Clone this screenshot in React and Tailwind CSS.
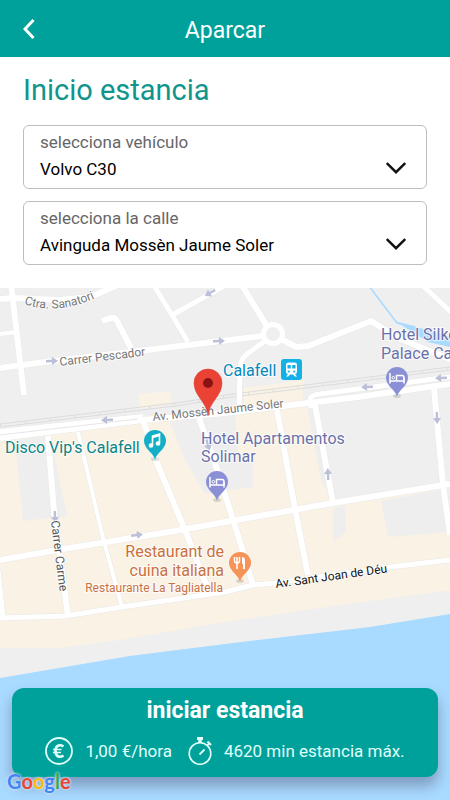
import { useState } from 'react';

const VEHICLES = ['Volvo C30', 'Seat Ibiza'];
const STREETS = ['Avinguda Mossèn Jaume Soler', 'Carrer Pescador', 'Avinguda Sant Joan de Déu'];

/* Drop-down with its caption inside the frame */
const SelectField = ({ id, label, options }) => {
  const [value, setValue] = useState(options[0]);

  return (
    <div className="relative h-16 rounded-md border border-[#bdbdbd] bg-white">
      <label htmlFor={id} className="block px-4 pt-[6px] text-[17px] leading-5 text-[#666]">
        {label}
      </label>
      <select
        id={id}
        value={value}
        onChange={(e) => setValue(e.target.value)}
        className="block w-full appearance-none bg-transparent px-4 pt-[3px] text-[17px] leading-7 text-black outline-none"
      >
        {options.map((option) => (
          <option key={option}>{option}</option>
        ))}
      </select>
      <svg
        viewBox="0 0 20 12"
        className="pointer-events-none absolute right-5 bottom-[14px] h-3 w-5"
        fill="none"
        stroke="#111"
        strokeWidth="2.4"
      >
        <path d="M0.8 1 L10 10.2 L19.2 1" />
      </svg>
    </div>
  );
};

const ROADS = [
  { d: 'M11 284 L24 395', w: 6 },
  { d: 'M0 299 L14 298 L60 300 L90 297 L118 285', w: 6 },
  { d: 'M0 334 L16 332', w: 4 },
  { d: 'M0 368 L45 362 L130 352 L213 342 L262 336', w: 6 },
  { d: 'M102 321 L111 318 Q115 317 117 321 L131 348', w: 6 },
  { d: 'M153 284 L172 315 L188 342', w: 5 },
  { d: 'M172 315 L228 284', w: 5 },
  { d: 'M241 284 L267 326', w: 6 },
  { d: 'M265 341 L247 354 Q240 360 240 368 L239 412', w: 5 },
  { d: 'M281 339 L296 347 L308 346 L371 321 L398 338 L452 360', w: 6 },
  { d: 'M421 284 L452 313', w: 5 },
  { d: 'M0 432 L143 417', w: 6 },
  { d: 'M0 438 L143 420 L225 413 L358 397 L450 384', w: 6 },
  { d: 'M311 408 L310 400 Q310 395 320 394 L450 377', w: 5 },
  { d: 'M0 560 L63 549 L175 531 L225 522 L333 503 L450 484', w: 6 },
  { d: 'M0 618 L65 616 L122 607 L225 592 L253 585 L275 583 L390 567 L450 560', w: 5 },
  { d: 'M48 436 L54 512 L68 616', w: 6 },
  { d: 'M78 432 L103 538 L122 607', w: 4 },
  { d: 'M143 420 L157 463 L187 535 L209 592', w: 6 },
  { d: 'M199 418 L213 457 L237 532 L253 585', w: 6 },
  { d: 'M277 410 L295 509 L308 575', w: 6 },
  { d: 'M315 405 L333 503', w: 6 },
  { d: 'M434 388 L443 485 L450 535', w: 6 },
  { d: 'M-2 570 L3 618', w: 5 },
];

const ONE_WAY = [
  'translate(52 361) rotate(-3)',
  'translate(219 341) rotate(-3)',
  'translate(210 293) rotate(150)',
  'translate(107 420) rotate(177)',
  'translate(367 387) rotate(177)',
  'translate(441 378) rotate(177)',
  'translate(437 418) rotate(88)',
  'translate(328 474) rotate(-92)',
  'translate(55 517) rotate(88)',
  'translate(208 445) rotate(75)',
  'translate(137 535) rotate(-8)',
];

/* Teardrop marker, (x, y) is the tip */
const Pin = ({ x, y, color, children }) => (
  <g transform={`translate(${x} ${y})`}>
    <ellipse cx="0" cy="0" rx="4" ry="2" fill="#000" opacity="0.12" />
    <path
      d="M0 1 C-1 -6 -11 -10 -11 -18 A11 11 0 0 1 11 -18 C11 -10 1 -6 0 1 Z"
      fill={color}
    />
    {children}
  </g>
);

const BedGlyph = () => (
  <g fill="none" stroke="#fff" strokeWidth="1.5">
    <path d="M-7 -23 V-12.5 M-7 -15 H7.5 M7 -12.5 V-18" />
    <path d="M-0.5 -15.500 V-20.5 H5 Q7 -20.5 7 -18 V-15" />
    <circle cx="-3.700" cy="-18.300" r="1.300" strokeWidth="1" />
  </g>
);

const StreetMap = () => (
  <svg
    viewBox="0 288 450 512"
    preserveAspectRatio="xMidYMid slice"
    className="absolute inset-0 h-full w-full font-[Roboto,sans-serif]"
    role="img"
    aria-label="Mapa de Calafell"
  >
    <rect x="0" y="288" width="450" height="512" fill="#efefef" />

    {/* Built-up areas */}
    <g fill="#faf2e4">
      <path d="M0 440 L143 423 L312 404 L333 503 L452 484 L452 590 L340 605 L225 622 L120 640 L60 648 L0 648 Z" />
      <path d="M244 388 L304 380 L302 405 L244 412 Z" />
      <path d="M138 394 L170 391 L172 404 L140 409 Z" />
    </g>
    <g fill="#eeeeee">
      <path d="M15 440 L50 436 L67 516 L23 521 Z" />
      <path d="M170 422 L235 412 L238 455 L253 462 L253 487 L205 494 L184 458 Z" />
      <path d="M307 406 L316 405 L334 503 L321 480 Z" />
      <path d="M333 508 L345 506 L346 532 L333 542 Z" />
      <path d="M381 501 L450 488 L450 532 L388 537 Z" />
    </g>

    {/* Water */}
    <path d="M0 678 L130 656 L225 644 L370 627 L450 614 V800 H0 Z" fill="#a9daff" />
    <path d="M369 286 L397 323 L415 327" fill="none" stroke="#a9daff" strokeWidth="1.500" />

    {/* Railway */}
    <g fill="none" stroke="#dcdcdc" strokeWidth="1">
      <path d="M0 424 L183 402 L225 395 L450 367" />
      <path d="M0 427 L183 405 L225 398 L450 370" />
      <path d="M0 425.500 L183 403.500 L225 396.500 L450 368.500" strokeWidth="3" strokeDasharray="1 24" />
    </g>

    <g fill="none" stroke="#e8e8e8" strokeLinejoin="round">
      {ROADS.map((road) => (
        <path key={road.d} d={road.d} strokeWidth={road.w + 1} />
      ))}
    </g>
    <g fill="none" stroke="#fff" strokeLinejoin="round">
      {ROADS.map((road) => (
        <path key={road.d} d={road.d} strokeWidth={road.w} />
      ))}
    </g>
    <path d="M395 321 L420 328 L450 337 V347 L428 342 Z" fill="#a9daff" />
    <circle cx="273" cy="334" r="9.500" fill="#efefef" stroke="#fff" strokeWidth="5" />
    <path d="M0 435 L138 419" stroke="#e6e6e6" strokeWidth="1" />

    <g fill="#bcbfd8">
      {ONE_WAY.map((transform) => (
        <path key={transform} transform={transform} d="M-6 -1.200 H0 V-4 L6 0 L0 4 V1.200 H-6 Z" />
      ))}
    </g>

    {/* Street names */}
    <g fill="#777" fontSize="12" stroke="#fff" strokeOpacity="0.7" strokeWidth="2" paintOrder="stroke" strokeLinejoin="round">
      <path id="sanatori" d="M24 304 Q60 317 106 293" fill="none" stroke="none" />
      <text>
        <textPath href="#sanatori">Ctra. Sanatori</textPath>
      </text>
      <text transform="translate(60 366) rotate(-7)">Carrer Pescador</text>
      <text transform="translate(153 421) rotate(-6)">Av. Mossèn Jaume Soler</text>
      <text transform="translate(51 521) rotate(83)" fill="#555">Carrer Carme</text>
      <text transform="translate(276 588) rotate(-8)" fill="#111">Av. Sant Joan de Déu</text>
    </g>

    {/* Places */}
    <g fontSize="16" stroke="#fff" strokeOpacity="0.8" strokeWidth="2" paintOrder="stroke" strokeLinejoin="round">
      <text x="223" y="376" fill="#0288bd">Calafell</text>
      <g fill="#6b70a8">
        <text x="381" y="340">Hotel Silke</text>
        <text x="381" y="359">Palace Ca</text>
        <text x="201" y="444">Hotel Apartamentos</text>
        <text x="201" y="462">Solimar</text>
      </g>
      <text x="5" y="453" fill="#0b8484">Disco Vip's Calafell</text>
      <g fill="#c9713f" textAnchor="end">
        <text x="224" y="557">Restaurant de</text>
        <text x="224" y="576">cuina italiana</text>
        <text x="223" y="592" fontSize="12">Restaurante La Tagliatella</text>
      </g>
    </g>

    {/* Train station */}
    <g transform="translate(281 359)">
      <rect width="21" height="21" rx="3" fill="#14b1e7" />
      <path d="M7.500 3.500 H13.500 Q16 3.500 16 6 V13 Q16 15 14 15 L16 17.500 H13.800 L12 15.500 H9 L7.200 17.500 H5 L7 15 Q5 15 5 13 V6 Q5 3.500 7.500 3.500 Z" fill="#fff" />
      <path d="M6.500 6 H9.800 V9.500 H6.500 Z M11.200 6 H14.500 V9.500 H11.200 Z" fill="#14b1e7" />
      <circle cx="7.800" cy="12.500" r="1.100" fill="#14b1e7" />
      <circle cx="13.200" cy="12.500" r="1.100" fill="#14b1e7" />
    </g>

    <Pin x={397} y={396} color="#8a8fd6">
      <BedGlyph />
    </Pin>
    <Pin x={217} y={500} color="#8a8fd6">
      <BedGlyph />
    </Pin>
    <Pin x={155} y={459} color="#14afc6">
      <path d="M-2.500 -14 V-23 L4.500 -25 V-16" fill="none" stroke="#fff" strokeWidth="1.600" />
      <path d="M-2.500 -22 L4.500 -24" stroke="#fff" strokeWidth="2.500" />
      <circle cx="-4" cy="-13.500" r="2.300" fill="#fff" />
      <circle cx="3" cy="-15.500" r="2.300" fill="#fff" />
    </Pin>
    <Pin x={240} y={581} color="#f59358">
      <path d="M-3 -12 V-18 M-5.500 -24 V-20 Q-5.500 -18 -3 -18 Q-0.500 -18 -0.500 -20 V-24 M-3 -24 V-18" fill="none" stroke="#fff" strokeWidth="1.500" />
      <path d="M2 -24 Q5 -24 5 -20 V-12 H3 V-17 H2 Z" fill="#fff" />
    </Pin>

    {/* Selected parking spot */}
    <path
      d="M208 416 C207 402 194 396 194 383 A14 14 0 0 1 222 383 C222 396 209 402 208 416 Z"
      fill="#ea4335"
      stroke="#d73a2d"
      strokeWidth="0.500"
    />
    <circle cx="208" cy="383" r="5" fill="#8a1414" />
  </svg>
);

const EuroIcon = () => (
  <svg viewBox="0 0 28 28" className="h-7 w-7 shrink-0" fill="none" stroke="#e0fffa">
    <circle cx="14" cy="14" r="13" strokeWidth="1.800" />
    <path d="M18.500 9.300 C13.500 6.500 10.500 9.500 10.500 14 C10.500 18.500 13.500 21.500 18.500 18.700" strokeWidth="2.600" />
    <path d="M8 12.500 H16.500 M8 15.500 H16" strokeWidth="1.700" />
  </svg>
);

const StopwatchIcon = () => (
  <svg viewBox="0 0 24 28" className="h-7 w-6 shrink-0" fill="none" stroke="#e0fffa">
    <circle cx="12" cy="16.500" r="10.800" strokeWidth="1.600" />
    <path d="M9 1.500 H15" strokeWidth="3" />
    <path d="M12 2 V6" strokeWidth="3.500" />
    <path d="M18.800 8.800 L21.500 6" strokeWidth="1.800" />
    <path d="M19.500 4.500 L23 8" strokeWidth="2.200" />
    <path d="M11.500 17.500 L16.500 12.500" strokeWidth="1.800" />
  </svg>
);

export default function App() {
  return (
    <div className="flex min-h-screen flex-col bg-white font-[Roboto,sans-serif]">
      <header className="grid h-[57px] grid-cols-[56px_1fr_56px] items-center bg-[#00a19a] text-white">
        <button type="button" aria-label="Volver" className="flex h-full items-center pl-[23px]">
          <svg viewBox="0 0 12 20" className="h-5 w-3" fill="none" stroke="currentColor" strokeWidth="3">
            <path d="M10.500 1 L2 10 L10.500 19" />
          </svg>
        </button>
        <h1 className="pt-1 text-center text-[23px] leading-7">Aparcar</h1>
      </header>

      <section className="px-[23px] pt-4 pb-[23px]">
        <h2 className="mb-[18px] text-[29px] leading-[34px] text-[#0f958b]">Inicio estancia</h2>
        <div className="flex flex-col gap-3">
          <SelectField id="vehicle" label="selecciona vehículo" options={VEHICLES} />
          <SelectField id="street" label="selecciona la calle" options={STREETS} />
        </div>
      </section>

      <main className="relative flex flex-1 flex-col justify-end overflow-hidden p-3 pb-[23px]">
        <StreetMap />

        <button
          type="button"
          className="relative flex h-[89px] w-full flex-col items-center rounded-xl bg-[#00a19a] pt-[9px] text-white shadow-[0_9px_14px_rgba(60,60,90,0.4)]"
        >
          <span className="text-[23px] leading-7 font-bold">iniciar estancia</span>
          <span className="mt-3 flex items-center text-[17px] leading-7 text-[#e0fffa]">
            <EuroIcon />
            <span className="mr-4 ml-3">1,00 €/hora</span>
            <StopwatchIcon />
            <span className="ml-3">4620 min estancia máx.</span>
          </span>
        </button>

        {/* Map attribution */}
        <span
          aria-label="Google"
          className="absolute bottom-[5px] left-[7px] font-[Lato,sans-serif] text-[20px] leading-7 font-bold [text-shadow:0_0_2px_#d5e6f5,0_0_3px_#d5e6f5]"
        >
          <span className="text-[#4285f4]">G</span>
          <span className="text-[#ea4335]">o</span>
          <span className="text-[#fbbc05]">o</span>
          <span className="text-[#4285f4]">g</span>
          <span className="text-[#34a853]">l</span>
          <span className="text-[#ea4335]">e</span>
        </span>
      </main>
    </div>
  );
}
